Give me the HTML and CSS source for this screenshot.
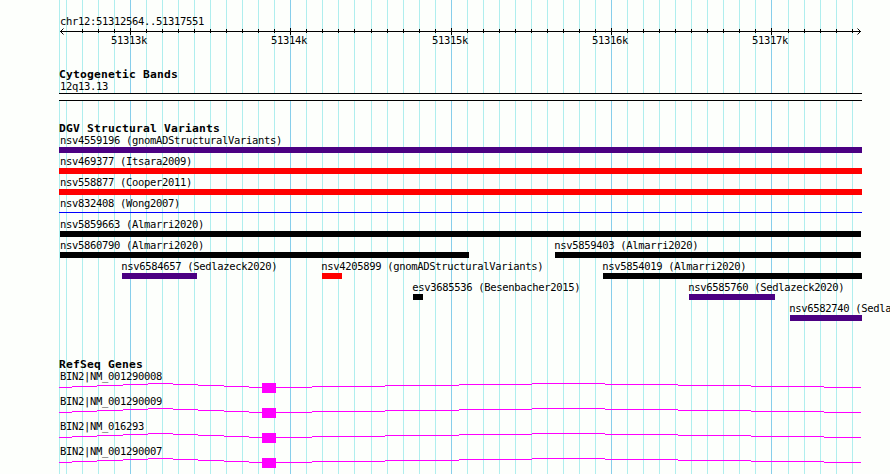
FILE: index.html
```html
<!DOCTYPE html>
<html lang="en">
<head>
<meta charset="utf-8">
<title>chr12:51312564..51317551</title>
<link rel="stylesheet" href="styles.css">
</head>
<body>
<main class="browser">
  <svg class="gridlines" width="890" height="474" shape-rendering="crispEdges" aria-hidden="true">
    <path class="minor" d="M59.5 0v474M66.5 0v474M82.5 0v474M98.5 0v474M114.5 0v474M146.5 0v474M162.5 0v474M178.5 0v474M194.5 0v474M210.5 0v474M226.5 0v474M242.5 0v474M258.5 0v474M274.5 0v474M306.5 0v474M322.5 0v474M338.5 0v474M354.5 0v474M371.5 0v474M387.5 0v474M403.5 0v474M419.5 0v474M435.5 0v474M467.5 0v474M483.5 0v474M499.5 0v474M515.5 0v474M531.5 0v474M547.5 0v474M563.5 0v474M579.5 0v474M595.5 0v474M627.5 0v474M643.5 0v474M659.5 0v474M675.5 0v474M691.5 0v474M707.5 0v474M723.5 0v474M739.5 0v474M755.5 0v474M788.5 0v474M804.5 0v474M820.5 0v474M836.5 0v474M852.5 0v474"/>
    <path class="major" d="M130.5 0v474M290.5 0v474M451.5 0v474M611.5 0v474M771.5 0v474"/>
  </svg>

  <header class="scale">
    <div class="label">chr12:51312564..51317551</div>
    <svg class="ruler" width="803" height="20" shape-rendering="crispEdges">
      <path class="axis" d="M1 3.5h801M23.500 1v4M39.500 1v4M55.500 1v4M87.500 1v4M103.500 1v4M119.500 1v4M135.500 1v4M151.500 1v4M167.500 1v4M183.500 1v4M199.500 1v4M215.500 1v4M247.500 1v4M263.500 1v4M279.500 1v4M295.500 1v4M312.500 1v4M328.500 1v4M344.500 1v4M360.500 1v4M376.500 1v4M408.500 1v4M424.500 1v4M440.500 1v4M456.500 1v4M472.500 1v4M488.500 1v4M504.500 1v4M520.500 1v4M536.500 1v4M568.500 1v4M584.500 1v4M600.500 1v4M616.500 1v4M632.500 1v4M648.500 1v4M664.500 1v4M680.500 1v4M696.500 1v4M729.500 1v4M745.500 1v4M761.500 1v4M777.500 1v4M793.500 1v4"/>
      <path class="axis" d="M71.500 0v7M231.500 0v7M392.500 0v7M552.500 0v7M712.500 0v7"/>
      <path class="axis" shape-rendering="auto" d="M4.500 0.500l-3 3l3 3M798.500 0.500l3 3l-3 3"/>
      <text x="52" y="16">51313k</text>
      <text x="212" y="16">51314k</text>
      <text x="373" y="16">51315k</text>
      <text x="533" y="16">51316k</text>
      <text x="693" y="16">51317k</text>
    </svg>
  </header>

  <section class="track cytobands">
    <h2>Cytogenetic Bands</h2>
    <div class="label">12q13.13</div>
    <div class="band"></div>
  </section>

  <section class="track variants">
    <h2>DGV Structural Variants</h2>
    <div class="row"><div class="feature gain-loss" style="--start:0;--size:803"><span class="label">nsv4559196 (gnomADStructuralVariants)</span></div></div>
    <div class="row"><div class="feature loss" style="--start:0;--size:803"><span class="label">nsv469377 (Itsara2009)</span></div></div>
    <div class="row"><div class="feature loss" style="--start:0;--size:803"><span class="label">nsv558877 (Cooper2011)</span></div></div>
    <div class="row"><div class="feature thin" style="--start:0;--size:803"><span class="label">nsv832408 (Wong2007)</span></div></div>
    <div class="row"><div class="feature inset" style="--start:1;--size:801"><span class="label">nsv5859663 (Almarri2020)</span></div></div>
    <div class="row">
      <div class="feature inset" style="--start:1;--size:409"><span class="label">nsv5860790 (Almarri2020)</span></div>
      <div class="feature inner" style="--start:496;--size:306"><span class="label">nsv5859403 (Almarri2020)</span></div>
    </div>
    <div class="row">
      <div class="feature gain-loss inner" style="--start:63;--size:75"><span class="label">nsv6584657 (Sedlazeck2020)</span></div>
      <div class="feature loss inner" style="--start:263;--size:20"><span class="label">nsv4205899 (gnomADStructuralVariants)</span></div>
      <div class="feature inner" style="--start:544;--size:259"><span class="label">nsv5854019 (Almarri2020)</span></div>
    </div>
    <div class="row">
      <div class="feature inner" style="--start:354;--size:10"><span class="label">esv3685536 (Besenbacher2015)</span></div>
      <div class="feature gain-loss inner" style="--start:630;--size:86"><span class="label">nsv6585760 (Sedlazeck2020)</span></div>
    </div>
    <div class="row"><div class="feature gain-loss inner" style="--start:731;--size:72"><span class="label">nsv6582740 (Sedlazeck2020)</span></div></div>
  </section>

  <section class="track genes">
    <h2>RefSeq Genes</h2>
    <svg class="defs" width="0" height="0" aria-hidden="true">
      <symbol id="transcript" viewBox="0 0 803 13">
        <path d="M0 5.500h13M13 4.500h25M38 3.500h26M64 2.500h25M89 1.500h25M114 2.500h25M139 3.500h26M165 4.500h25M190 5.500h13M217 5.500h36M253 4.500h73M326 3.500h74M400 2.500h73M473 1.500h73M546 2.500h73M619 3.500h73M692 4.500h73M765 5.500h37" fill="none" stroke="#f0f"/>
        <rect x="203" y="1" width="14" height="10" fill="#f0f"/>
      </symbol>
    </svg>
    <div class="gene"><div class="label">BIN2|NM_001290008</div><svg width="803" height="13" shape-rendering="crispEdges"><use href="#transcript"/></svg></div>
    <div class="gene"><div class="label">BIN2|NM_001290009</div><svg width="803" height="13" shape-rendering="crispEdges"><use href="#transcript"/></svg></div>
    <div class="gene"><div class="label">BIN2|NM_016293</div><svg width="803" height="13" shape-rendering="crispEdges"><use href="#transcript"/></svg></div>
    <div class="gene"><div class="label">BIN2|NM_001290007</div><svg width="803" height="13" shape-rendering="crispEdges"><use href="#transcript"/></svg></div>
  </section>
</main>
</body>
</html>
```
FILE: styles.css
```css
* { box-sizing: border-box; }

body {
  margin: 0;
  background: #fdfffc;
  color: #000;
  font: 10.5px/12px "DejaVu Sans Mono", monospace;
  letter-spacing: -0.322px;
}

.browser {
  position: relative;
  width: 890px;
  height: 474px;
  padding: 15px 28px 0 59px;
  overflow: hidden;
}

.gridlines {
  position: absolute;
  inset: 0;
  z-index: -1;
}

.minor { stroke: #afeeee; }
.major { stroke: #87ceeb; }

svg { display: block; }

.label {
  display: block;
  height: 12px;
  padding-left: 1px;
  white-space: nowrap;
}

.scale { height: 53px; }
.ruler { margin-top: 1px; overflow: visible; }
.axis { fill: none; stroke: #000; }

h2 {
  margin: 0;
  height: 12px;
  font-size: 11.3px;
  line-height: 14px;
  font-weight: bold;
  letter-spacing: 0.197px;
}

.cytobands { height: 54px; }

.band {
  width: 803px;
  height: 8px;
  margin-top: 1px;
  border: solid #000;
  border-width: 1px 0;
  background: #fdfffc;
}

.variants { height: 236px; }

.row {
  display: grid;
  grid-template-columns: 803px;
  height: 21px;
}

.feature {
  grid-area: 1 / 1;
  width: calc(var(--size) * 1px);
  margin-left: calc(var(--start) * 1px);
}

.feature::after {
  content: "";
  display: block;
  height: 6px;
  margin-top: 1px;
  background: #000;
}

.gain-loss::after { background: #4b0082; }
.loss::after { background: #f00; }

.thin::after {
  height: 1px;
  margin-top: 3px;
  background: #00f;
}

.inset .label { padding-left: 0; }

.inner .label {
  padding-left: 0;
  margin-left: -0.7px;
}

.gene { height: 25px; }
.defs { height: 0; }
```
